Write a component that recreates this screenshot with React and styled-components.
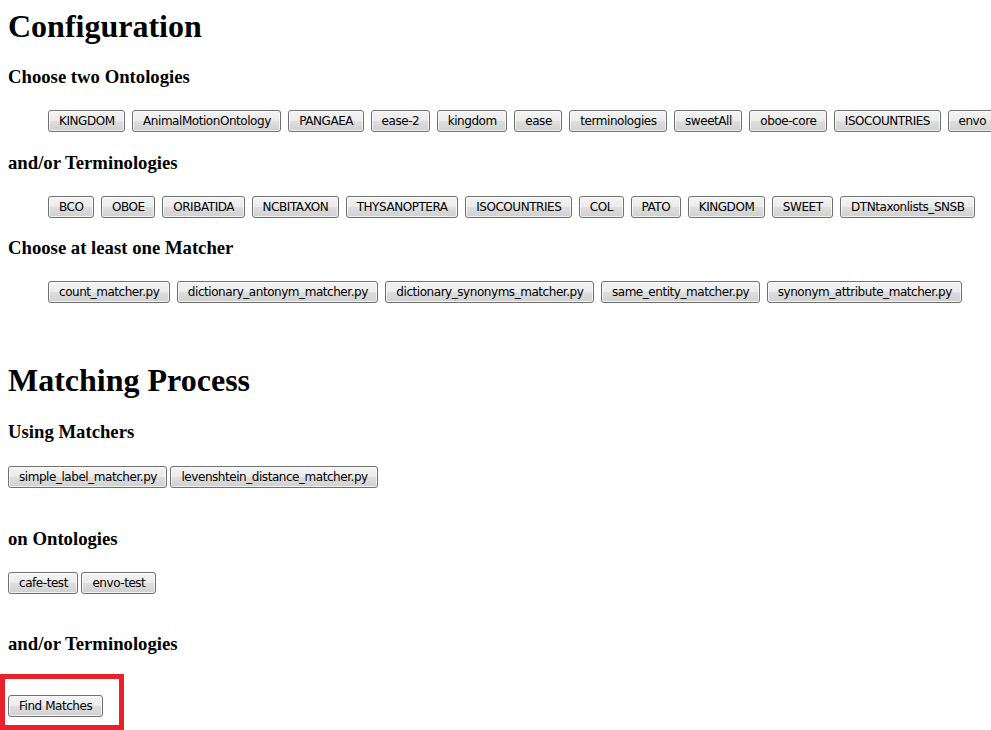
import React from 'react';
import styled, { createGlobalStyle } from 'styled-components';

const GlobalStyle = createGlobalStyle`
  html { overflow: hidden; }
  body {
    margin: 0;
    font-family: "Liberation Serif", "Times New Roman", serif;
    color: #000;
    background: #fff;
  }
`;

const Page = styled.div`
  padding: 8px;
  min-width: 975px;
`;

const PageTitle = styled.h1`
  font-size: 32px;
  font-weight: bold;
  line-height: normal;
  margin: ${(p) => (p.$first ? '0' : '21.44px')} 0 21.44px;
`;

const SectionTitle = styled.h3`
  font-size: 18.72px;
  font-weight: bold;
  line-height: normal;
  margin: 18.72px 0;
`;

const ButtonRow = styled.div`
  display: flex;
  flex-wrap: nowrap;
  white-space: nowrap;
  gap: ${(p) => (p.$indent ? '7px' : '3px')};
  padding: ${(p) => p.$top}px 0 ${(p) => p.$bottom}px ${(p) => (p.$indent ? '40px' : '0')};
`;

const OptionButton = styled.button`
  flex: none;
  box-sizing: border-box;
  height: 22px;
  padding: 0 9.5px 0 10px;
  border: 1px solid #707070;
  border-radius: 3px;
  background: linear-gradient(#f3f3f3 0%, #ececec 48%, #dedede 52%, #d0d0d0 100%);
  box-shadow: inset 0 0 0 1px rgba(255, 255, 255, 0.7);
  font-family: "DejaVu Sans", Verdana, sans-serif;
  font-size: 12px;
  letter-spacing: -0.45px;
  line-height: 20px;
  color: #000;
  cursor: pointer;
`;

const Highlight = styled.div`
  box-sizing: border-box;
  width: 124px;
  height: 56px;
  margin: 1px 0 0 -8px;
  padding: 16px 0 0 3px;
  border: 5px solid #e8212b;
`;

const ontologies = [
  'KINGDOM', 'AnimalMotionOntology', 'PANGAEA', 'ease-2', 'kingdom', 'ease',
  'terminologies', 'sweetAll', 'oboe-core', 'ISOCOUNTRIES', 'envo',
];
const terminologies = [
  'BCO', 'OBOE', 'ORIBATIDA', 'NCBITAXON', 'THYSANOPTERA', 'ISOCOUNTRIES',
  'COL', 'PATO', 'KINGDOM', 'SWEET', 'DTNtaxonlists_SNSB',
];
const matchers = [
  'count_matcher.py', 'dictionary_antonym_matcher.py', 'dictionary_synonyms_matcher.py',
  'same_entity_matcher.py', 'synonym_attribute_matcher.py',
];
const usedMatchers = ['simple_label_matcher.py', 'levenshtein_distance_matcher.py'];
const usedOntologies = ['cafe-test', 'envo-test'];

const Row = ({ items, ...rest }) => (
  <ButtonRow {...rest}>
    {items.map((t, i) => (
      <OptionButton key={i} type="button">{t}</OptionButton>
    ))}
  </ButtonRow>
);

export default function App() {
  return (
    <Page>
      <GlobalStyle />
      <PageTitle $first>Configuration</PageTitle>
      <SectionTitle>Choose two Ontologies</SectionTitle>
      <Row items={ontologies} $indent $top={3} $bottom={1} />
      <SectionTitle>and/or Terminologies</SectionTitle>
      <Row items={terminologies} $indent $top={3} $bottom={1} />
      <SectionTitle>Choose at least one Matcher</SectionTitle>
      <Row items={matchers} $indent $top={3} $bottom={38} />
      <PageTitle>Matching Process</PageTitle>
      <SectionTitle>Using Matchers</SectionTitle>
      <Row items={usedMatchers} $top={4} $bottom={21.5} />
      <SectionTitle>on Ontologies</SectionTitle>
      <Row items={usedOntologies} $top={3} $bottom={21} />
      <SectionTitle>and/or Terminologies</SectionTitle>
      <Highlight>
        <OptionButton type="button">Find Matches</OptionButton>
      </Highlight>
    </Page>
  );
}
